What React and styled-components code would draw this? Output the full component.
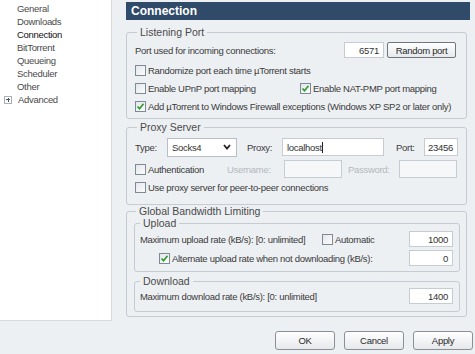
import React from "react";
import styled, { createGlobalStyle } from "styled-components";

const GlobalStyle = createGlobalStyle`
  html, body {
    margin: 0;
    padding: 0;
    background: #edf0f3;
  }
  body {
    font-family: "Liberation Sans", Arial, sans-serif;
    font-size: 9.5px;
    letter-spacing: -0.3px;
    color: #3a3a3a;
  }
`;

const Window = styled.div`
  width: 475px;
  height: 354px;
  display: flex;
  flex-direction: column;
  overflow: hidden;
`;

const Top = styled.div`
  display: flex;
  flex-direction: row;
  height: 321px;
`;

const Sidebar = styled.div`
  width: 112px;
  background: #fff;
  border-right: 1px solid #d6dade;
  border-bottom: 1px solid #d6dade;
  box-sizing: border-box;
  padding-top: 2px;
`;

const TreeItem = styled.div`
  display: flex;
  align-items: center;
  height: 13px;
  padding-left: ${(p) => (p.expander ? "4px" : "17px")};
  gap: 6px;
  color: ${(p) => (p.selected ? "#111" : "#4a4a4a")};
`;

const Expander = styled.span`
  width: 6px;
  height: 6px;
  border: 1px solid #a9b0b8;
  position: relative;
  background: #fff;
  &::before, &::after {
    content: "";
    position: absolute;
    background: #555;
  }
  &::before { left: 1px; right: 1px; top: 2.5px; height: 1px; }
  &::after { top: 1px; bottom: 1px; left: 2.5px; width: 1px; }
`;

const Main = styled.div`
  flex: 1;
  display: flex;
  flex-direction: column;
  padding: 2px 5px 0 14px;
`;

const Header = styled.div`
  height: 18px;
  line-height: 18px;
  background: #304b6a;
  color: #fff;
  font-weight: bold;
  font-size: 12px;
  letter-spacing: 0;
  padding-left: 5px;
`;

const Group = styled.fieldset`
  margin: ${(p) => p.top || 0}px ${(p) => (p.inner ? 0 : 3)}px 0 0;
  padding: ${(p) => p.pad || "4px 10px 3px 8px"};
  border: 1px solid #c4cbd3;
  border-radius: 3px;
  min-width: 0;
  display: flex;
  flex-direction: column;
`;

const Legend = styled.legend`
  margin-left: ${(p) => (p.inner ? 0 : 2)}px;
  padding: 0 3px;
  font-size: 10.5px;
  letter-spacing: 0;
  line-height: 12px;
  color: #4a4a4a;
`;

const Row = styled.div`
  display: flex;
  align-items: center;
  height: ${(p) => p.h || 18}px;
  margin-top: ${(p) => p.mt || 0}px;
  padding-left: ${(p) => p.indent || 0}px;
`;

const Label = styled.span`
  width: ${(p) => (p.w ? `${p.w}px` : "auto")};
  flex: ${(p) => (p.grow ? 1 : "none")};
  margin-left: ${(p) => p.ml || 0}px;
  color: ${(p) => (p.disabled ? "#b3b8be" : "inherit")};
  white-space: nowrap;
`;

const Field = styled.div`
  width: ${(p) => p.w}px;
  height: ${(p) => p.h || 16}px;
  box-sizing: border-box;
  border: 1px solid #c6ccd3;
  background: ${(p) => (p.disabled ? "#f6f7f9" : "#fff")};
  display: flex;
  align-items: center;
  justify-content: ${(p) => (p.left ? "flex-start" : "flex-end")};
  padding: 0 4px;
  color: #333;
  margin-left: ${(p) => p.ml || 0}px;
  flex: none;
`;

const Caret = styled.span`
  width: 1px;
  height: 11px;
  background: #222;
`;

const Select = styled.div`
  width: 70px;
  height: 19px;
  box-sizing: border-box;
  border: 1px solid #b8bec6;
  background: #fff;
  display: flex;
  align-items: center;
  justify-content: space-between;
  padding: 0 5px 0 4px;
  color: #333;
  flex: none;
`;

const Button = styled.div`
  width: ${(p) => p.w}px;
  height: ${(p) => p.h}px;
  box-sizing: border-box;
  border: 1px solid ${(p) => (p.dark ? "#6f767e" : "#8a9097")};
  border-radius: ${(p) => (p.dark ? 2 : 3)}px;
  background: linear-gradient(#ffffff, #e6e8eb);
  display: flex;
  align-items: center;
  justify-content: center;
  color: #2a2a2a;
  margin-left: ${(p) => p.ml || 0}px;
  flex: none;
`;

const CheckWrap = styled.span`
  display: flex;
  align-items: center;
  gap: 2px;
  width: ${(p) => (p.w ? `${p.w}px` : "auto")};
  margin-left: ${(p) => p.ml || 0}px;
  white-space: nowrap;
  flex: none;
`;

const Box = styled.span`
  width: 11px;
  height: 11px;
  box-sizing: border-box;
  border: 1px solid #7f8a96;
  background: linear-gradient(135deg, #e4e7eb, #fbfbfc);
  display: flex;
  align-items: center;
  justify-content: center;
  flex: none;
`;

const Footer = styled.div`
  display: flex;
  justify-content: flex-end;
  padding: 10px 2px 0 0;
  gap: 9px;
`;

function Check({ checked, children, w, ml }) {
  return (
    <CheckWrap w={w} ml={ml}>
      <Box>
        {checked && (
          <svg width="9" height="9" viewBox="0 0 9 9">
            <polyline points="1.5,4.5 3.5,6.8 7.5,1.8" fill="none" stroke="#2b9a2b" strokeWidth="1.6" />
          </svg>
        )}
      </Box>
      {children}
    </CheckWrap>
  );
}

const treeItems = ["General", "Downloads", "Connection", "BitTorrent", "Queueing", "Scheduler", "Other"];

export default function App() {
  return (
    <Window>
      <GlobalStyle />
      <Top>
        <Sidebar>
          {treeItems.map((t) => (
            <TreeItem key={t} selected={t === "Connection"}>{t}</TreeItem>
          ))}
          <TreeItem expander>
            <Expander />
            Advanced
          </TreeItem>
        </Sidebar>
        <Main>
          <Header>Connection</Header>

          <Group top={6}>
            <Legend>Listening Port</Legend>
            <Row h={16}>
              <Label grow>Port used for incoming connections:</Label>
              <Field w={40}>6571</Field>
              <Button w={69} h={16} dark ml={3}>Random port</Button>
            </Row>
            <Row mt={3}>
              <Check>Randomize port each time µTorrent starts</Check>
            </Row>
            <Row>
              <Check w={165}>Enable UPnP port mapping</Check>
              <Check checked>Enable NAT-PMP port mapping</Check>
            </Row>
            <Row>
              <Check checked>Add µTorrent to Windows Firewall exceptions (Windows XP SP2 or later only)</Check>
            </Row>
          </Group>

          <Group top={2} pad="5px 8px 8px 8px">
            <Legend>Proxy Server</Legend>
            <Row>
              <Label w={32}>Type:</Label>
              <Select>
                Socks4
                <svg width="8" height="6" viewBox="0 0 8 6">
                  <polyline points="1,1 4,4.5 7,1" fill="none" stroke="#222" strokeWidth="1.8" />
                </svg>
              </Select>
              <Label w={35} ml={10}>Proxy:</Label>
              <Field w={102} h={18} left>localhost<Caret /></Field>
              <Label w={28} ml={12}>Port:</Label>
              <Field w={34} h={18}>23456</Field>
            </Row>
            <Row mt={4}>
              <Check w={92}>Authentication</Check>
              <Label w={57} disabled>Username:</Label>
              <Field w={58} h={18} disabled />
              <Label w={51} ml={6} disabled>Password:</Label>
              <Field w={58} h={18} disabled />
            </Row>
            <Row>
              <Check>Use proxy server for peer-to-peer connections</Check>
            </Row>
          </Group>

          <Group top={0} pad="0 6px 4px 7px">
            <Legend>Global Bandwidth Limiting</Legend>
            <Group inner pad="2px 6px 5px 5px">
              <Legend inner>Upload</Legend>
              <Row h={16}>
                <Label w={182}>Maximum upload rate (kB/s): [0: unlimited]</Label>
                <Check>Automatic</Check>
                <Label grow />
                <Field w={44}>1000</Field>
              </Row>
              <Row h={16} mt={3} indent={19}>
                <Check checked>Alternate upload rate when not downloading (kB/s):</Check>
                <Label grow />
                <Field w={44}>0</Field>
              </Row>
            </Group>
            <Group inner top={3} pad="1px 6px 7px 5px">
              <Legend inner>Download</Legend>
              <Row h={16}>
                <Label grow>Maximum download rate (kB/s): [0: unlimited]</Label>
                <Field w={44}>1400</Field>
              </Row>
            </Group>
          </Group>
        </Main>
      </Top>
      <Footer>
        <Button w={60} h={19}>OK</Button>
        <Button w={60} h={19}>Cancel</Button>
        <Button w={60} h={19}>Apply</Button>
      </Footer>
    </Window>
  );
}
